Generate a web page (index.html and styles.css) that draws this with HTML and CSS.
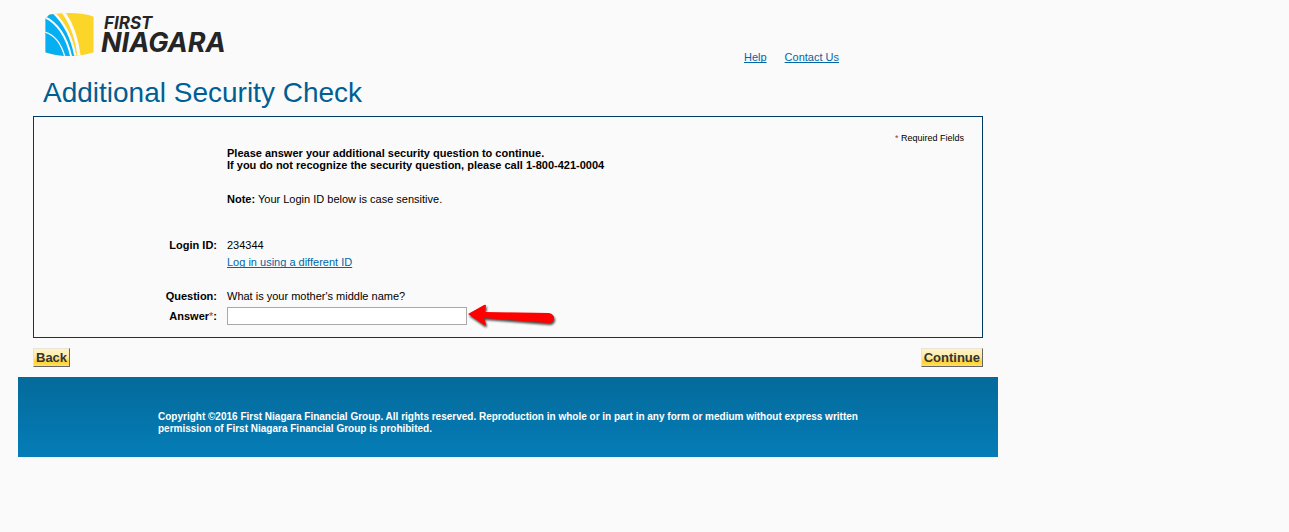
FILE: index.html
```html
<!DOCTYPE html>
<html lang="en">
<head>
    <meta charset="UTF-8">
    <meta name="viewport" content="width=device-width, initial-scale=1.0">
    <title>Additional Security Check</title>
    <link rel="stylesheet" href="styles.css">
</head>
<body>
    <div class="page">
        <header class="header">
            <div class="logo">
                <svg class="logo-mark" viewBox="0 0 147 130" aria-hidden="true">
                    <defs>
                        <clipPath id="mark-shape">
                            <path d="M0 18 L12 5 Q36 0 73 0 Q117 0 147 11 V119 Q117 130 73 130 Q30 130 0 119 Z"/>
                        </clipPath>
                    </defs>
                    <g clip-path="url(#mark-shape)">
                        <rect width="147" height="130" fill="#fbd527"/>
                        <path d="M0 0 H22 Q78 45 94 130 H0 Z" fill="#06aff2"/>
                        <g fill="none" stroke="#fafafa">
                            <path d="M52 -6 Q92 44 103 134" stroke-width="10"/>
                            <path d="M20 -6 Q76 44 92 134" stroke-width="7"/>
                            <path d="M-6 10 Q58 38 79 134" stroke-width="6"/>
                            <path d="M-4 57 Q42 68 60 134" stroke-width="4"/>
                        </g>
                    </g>
                </svg>
                <div class="logo-text">
                    <span class="logo-first">FIRST</span>
                    <span class="logo-niagara">NIAGARA</span>
                </div>
            </div>
            <nav class="top-links">
                <a href="#">Help</a>
                <a href="#">Contact Us</a>
            </nav>
        </header>

        <main class="main">
            <h1 class="title">Additional Security Check</h1>
            <form id="security-form" class="panel">
                <p class="required"><span class="star">*</span> Required Fields</p>
                <div class="intro">
                    <p><strong>Please answer your additional security question to continue.<br>
                    If you do not recognize the security question, please call 1-800-421-0004</strong></p>
                    <p class="note"><strong>Note:</strong> Your Login ID below is case sensitive.</p>
                </div>
                <div class="fields">
                    <span class="label">Login ID:</span>
                    <span>234344</span>
                    <a class="switch-id" href="#">Log in using a different ID</a>
                    <span class="label">Question:</span>
                    <span>What is your mother's middle name?</span>
                    <label class="label" for="answer">Answer<span class="star">*</span>:</label>
                    <div class="answer-row">
                        <input id="answer" class="answer" type="text">
                        <svg class="arrow" viewBox="0 0 92 30" aria-hidden="true">
                            <path d="M1 13 L17 4 Q19 3 19 5 L18 11 L82 12 C89 13 89 22 81 22 L17 17 L19 23 Q19 25 17 24 Z"/>
                        </svg>
                    </div>
                </div>
            </form>
            <div class="actions">
                <button class="button" type="button">Back</button>
                <button class="button" type="submit" form="security-form">Continue</button>
            </div>
        </main>

        <footer class="footer">
            <p>Copyright ©2016 First Niagara Financial Group. All rights reserved. Reproduction in whole or in part in any form or medium without express written permission of First Niagara Financial Group is prohibited.</p>
        </footer>
    </div>
</body>
</html>
```

FILE: styles.css
```css
body {
    margin: 0;
    background-color: #fafafa;
    color: #000;
    font-family: Arial, "Liberation Sans", sans-serif;
    font-size: 11px;
    line-height: 12px;
}

p {
    margin: 0;
}

a {
    color: #0066a6;
    text-decoration-skip-ink: none;
}

.page {
    max-width: 980px;
    margin: 0 18px;
}

.header {
    display: flex;
    justify-content: space-between;
    align-items: flex-end;
    padding: 13px 159px 0 27px;
}

.logo {
    display: flex;
    gap: 7px;
}

.logo-mark {
    width: 49px;
    height: 43px;
}

.logo-text {
    display: flex;
    flex-direction: column;
    color: #252525;
    font-family: Inter, sans-serif;
    font-style: italic;
    font-weight: 700;
}

.logo-first {
    padding-left: 3px;
    font-size: 17px;
    line-height: 20px;
}

.logo-niagara {
    font-size: 27px;
    line-height: 20px;
}

.top-links {
    display: flex;
    gap: 18px;
    position: relative;
    top: 7px;
}

.main {
    padding: 0 15px;
}

.title {
    margin: 21px 0 7px;
    padding-left: 10px;
    color: #005f92;
    font-size: 28px;
    font-weight: 400;
    line-height: 32px;
}

.panel {
    padding: 15px 0 12px;
    border: 1px solid #003a66;
}

.required {
    padding-right: 18px;
    font-size: 9px;
    text-align: right;
}

.star {
    color: #a33c1e;
    font-weight: 400;
}

.intro {
    padding: 3px 18px 34px 193px;
}

.note {
    margin-top: 22px;
}

.fields {
    display: grid;
    grid-template-columns: 183px 1fr;
    column-gap: 10px;
    row-gap: 5px;
    align-items: center;
}

.label {
    font-weight: 700;
    text-align: right;
}

.switch-id {
    grid-column: 2;
    justify-self: start;
    margin-bottom: 17px;
}

.answer-row {
    display: flex;
    align-items: center;
}

.answer {
    box-sizing: border-box;
    width: 240px;
    height: 18px;
    padding: 1px 3px;
    border: 1px solid #a9a9a9;
    background-color: #fff;
    font: inherit;
}

.arrow {
    width: 92px;
    height: 30px;
    margin: -6px 0;
    fill: #fe0000;
    filter: drop-shadow(1px 2px 1px rgba(0, 0, 0, 0.7));
}

.actions {
    display: flex;
    justify-content: space-between;
    padding: 10px 0;
}

.button {
    height: 19px;
    padding: 0 2px;
    border: 1px solid;
    border-color: #e8e4d8 #666 #666 #e8e4d8;
    background: linear-gradient(#fff3c4 0%, #ffecab 45%, #ffd22e 75%, #ffe16c 100%);
    color: #333;
    font-family: Arial, "Liberation Sans", sans-serif;
    font-size: 13px;
    font-weight: 700;
    line-height: 16px;
}

.footer {
    padding: 34px 120px 22px 140px;
    background: linear-gradient(#046a9b, #057db7);
    color: #fff;
    font-size: 10px;
    font-weight: 700;
}
```
